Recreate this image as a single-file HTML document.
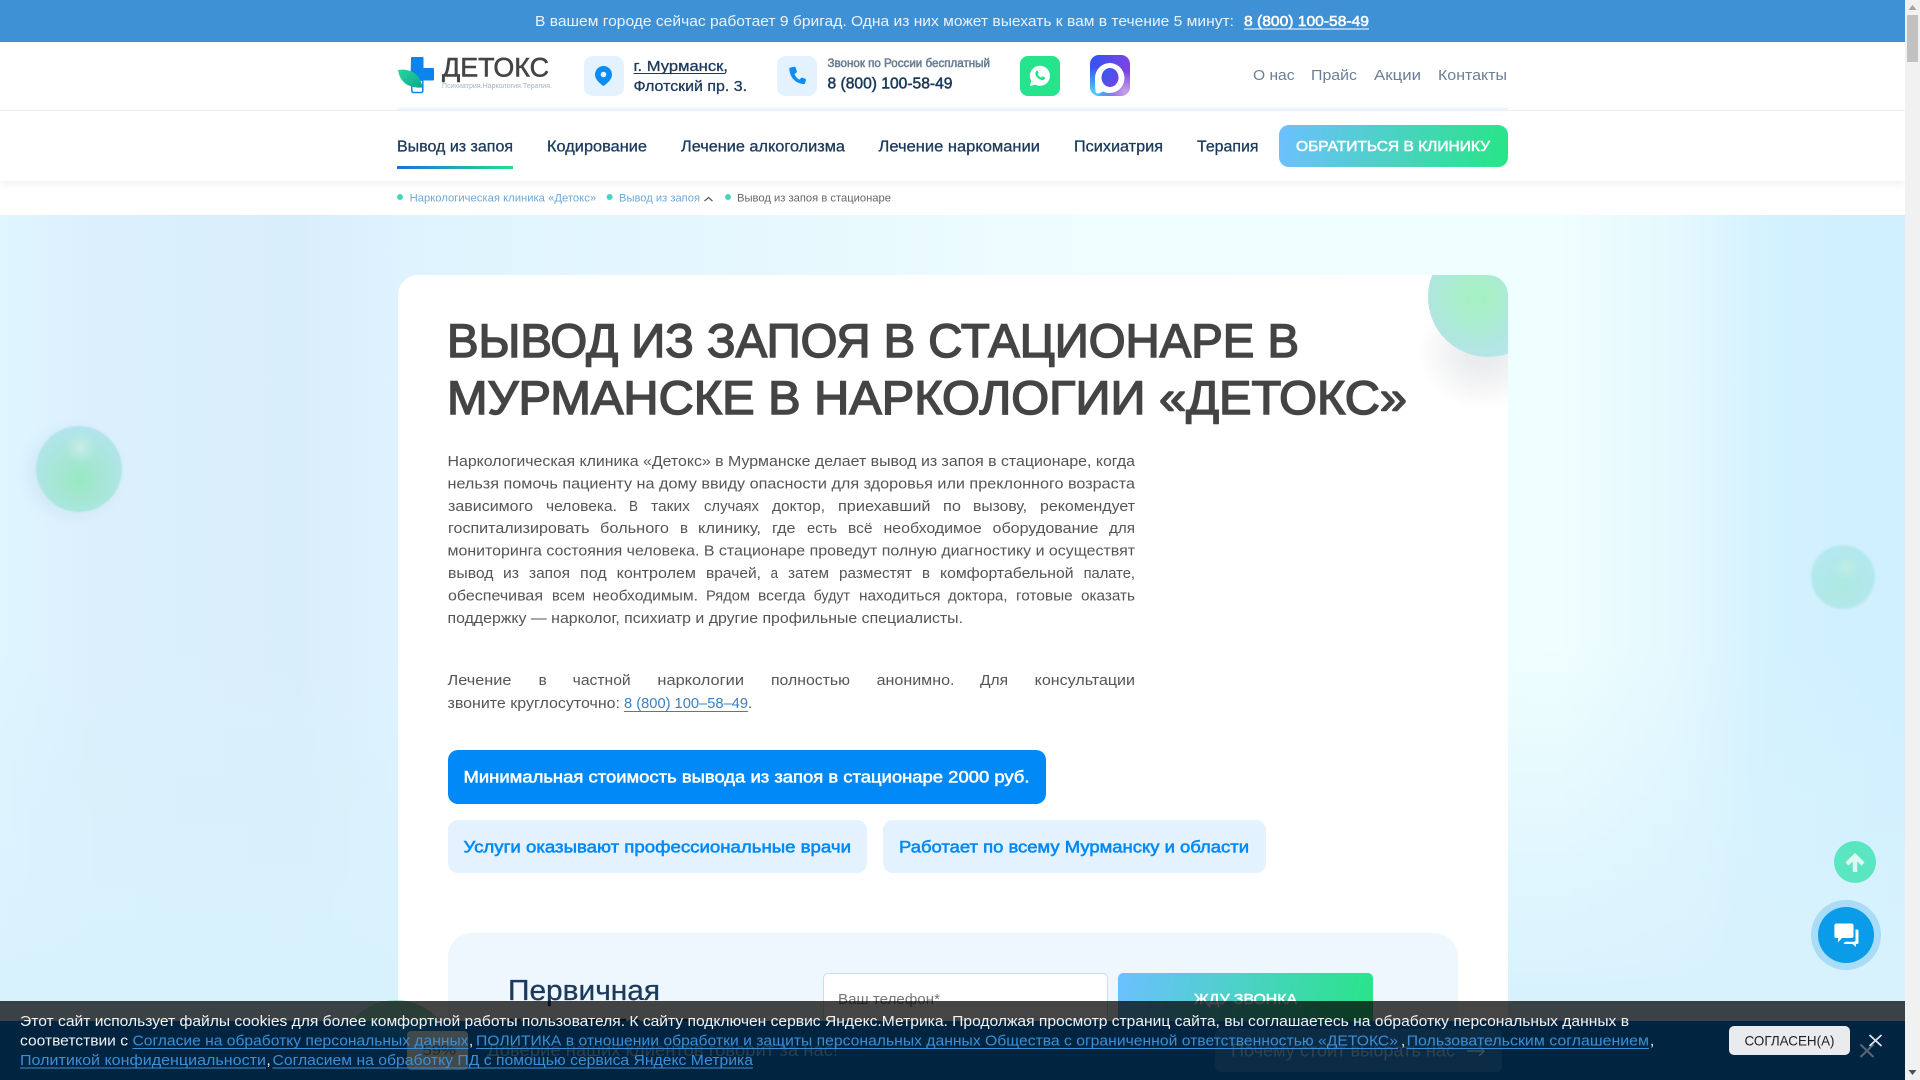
<!DOCTYPE html>
<html lang="ru"><head><meta charset="utf-8"><title>Детокс</title>
<style>
html,body{margin:0;padding:0;width:1920px;height:1080px;overflow:hidden;background:#fff}
div{position:absolute;box-sizing:border-box}
svg{position:absolute;left:0;top:0;display:block}
text{font-family:"Liberation Sans",sans-serif;white-space:pre}
.m{stroke:currentColor;stroke-width:.3px}
.s{stroke:currentColor;stroke-width:.55px}
.t{stroke:currentColor;stroke-width:1.5px}
.p text,text.p{font-size:15px;fill:#555}
.c text{font-size:15px;fill:#f2f2f2}
.c .l{fill:#3a8fd8}
</style></head><body>

<div style="left:0;top:215px;width:1905px;height:865px;background:linear-gradient(to bottom,rgba(216,242,253,0) 50%,#d8f2fd 90%),linear-gradient(to right,#dff5ff 0,#dbf0fc 100px,#d9eefb 300px,#def3fe 400px,#eefdff 1100px,#effeff 1560px,#e4f8fe 1680px,#d3f1fe 1770px,#cfeffe 1905px)"></div>
<div style="left:36px;top:426px;width:86px;height:86px;border-radius:50%;filter:blur(.7px);background:radial-gradient(circle at 52% 25%,#c8ede6 0,rgba(190,235,235,0) 20%),radial-gradient(circle at 50% 62%,#98e8c0 0,#a4e6d2 28%,#b3e4ee 78%);box-shadow:-6px 4px 14px rgba(150,190,210,.18)"></div>
<div style="left:1811px;top:545px;width:64px;height:64px;border-radius:50%;filter:blur(1px);background:radial-gradient(circle at 55% 35%,#c0eee6 0,rgba(190,235,235,0) 22%),radial-gradient(circle at 50% 65%,#aee9e0 0,#b2e8ee 60%,#b8e8f2 100%)"></div>

<div style="left:398px;top:275px;width:1110px;height:805px;background:#fff;border-radius:20px 20px 0 0;overflow:hidden">
  <div style="left:1020px;top:20px;width:130px;height:115px;background:radial-gradient(closest-side,rgba(60,70,90,.10) 25%,rgba(60,70,90,0) 100%)"></div>
  <div style="left:1030px;top:-38px;width:120px;height:120px;border-radius:50%;background:radial-gradient(circle at 90% 30%,#d8f8d4 0,rgba(216,248,212,0) 22%),radial-gradient(circle at 40% 50%,#a4f0c2 0,#a8eecb 22%,#b0e6e0 50%,#b9e6ee 78%,#cdeef0 100%)"></div>
  <div style="left:50px;top:475px;width:598px;height:54px;background:#0089f7;border-radius:10px"></div>
  <div style="left:50px;top:545px;width:419px;height:53px;background:#e3f2fe;border-radius:10px"></div>
  <div style="left:485px;top:545px;width:383px;height:53px;background:#e3f2fe;border-radius:10px"></div>
  <div style="left:50px;top:658px;width:1010px;height:147px;background:#eef7fe;border-radius:24px 24px 0 0"></div>
  <div style="left:425px;top:698px;width:285px;height:70px;background:#fff;border:1.5px solid #a8f0e4;border-radius:5px"></div>
  <div style="left:720px;top:698px;width:255px;height:70px;border-radius:5px;background:linear-gradient(100deg,#6cc0ff,#27e585)"></div>
</div>

<div style="left:0;top:0;width:1905px;height:42px;background:#3f91d6"></div>
<div style="left:0;top:42px;width:1905px;height:173px;background:#fff"></div>
<div style="left:0;top:110px;width:1905px;height:1px;background:#edf4fa"></div>
<div style="left:397px;top:108px;width:1111px;height:2px;background:#eef6fd"></div>
<div style="left:0;top:111px;width:1905px;height:70px;background:#fff;box-shadow:0 3px 8px rgba(40,60,90,.07)"></div>
<div style="left:584px;top:56px;width:40px;height:40px;background:#e3f2fe;border-radius:9px"></div>
<div style="left:777px;top:56px;width:40px;height:40px;background:#e3f2fe;border-radius:9px"></div>
<div style="left:1020px;top:56px;width:40px;height:40px;background:#25e48b;border-radius:8px"></div>
<div style="left:1090px;top:55px;width:40px;height:41px;border-radius:9px;background:radial-gradient(circle at 88% 90%,#c9a5ea 0,rgba(160,90,230,0) 40%),radial-gradient(circle at 8% 95%,#4fd5f5 0,rgba(60,200,245,0) 50%),linear-gradient(100deg,#2f55f5,#8a3fe0)"></div>
<div style="left:1279px;top:125px;width:229px;height:42px;border-radius:10px;background:linear-gradient(100deg,#6cc0ff,#27e585)"></div>
<div style="left:397px;top:166px;width:116px;height:3px;background:linear-gradient(to right,#1a6fe0,#22e08a)"></div>

<svg width="1920" height="1080" viewBox="0 0 1920 1080" xmlns="http://www.w3.org/2000/svg">
<defs><linearGradient id="lf" x1="0" y1="0" x2="1" y2="1"><stop offset="0" stop-color="#27d8a0"/><stop offset="1" stop-color="#0ea58c"/></linearGradient>
<linearGradient id="mx" x1="0" y1="0" x2="1" y2="1"><stop offset="0" stop-color="#2a60f0"/><stop offset="1" stop-color="#7a3fe0"/></linearGradient></defs>

<text x="535" y="26" font-size="15" fill="#eaf3fb" textLength="699" lengthAdjust="spacingAndGlyphs">В вашем городе сейчас работает 9 бригад. Одна из них может выехать к вам в течение 5 минут:</text>
<text x="1244" y="26" font-size="15" fill="#fff" class="s" color="#fff" textLength="125" lengthAdjust="spacingAndGlyphs">8 (800) 100-58-49</text>
<rect x="1244" y="28.5" width="125" height="1" fill="#fff"/>

<path d="M411 58a1 1 0 0 1 1-1h10.500a1 1 0 0 1 1 1v10h9.500a1 1 0 0 1 1 1v10.500a1 1 0 0 1-1 1h-22.500z" fill="#0b84ee"/>
<rect x="411.800" y="80" width="11" height="12.500" rx="1.500" fill="#fff" stroke="#0b84ee" stroke-width="1.500"/>
<path d="M398 70C408 68.500 420 72 422.500 87.500C411 88.500 400 84 398 70z" fill="url(#lf)"/>
<text x="442" y="76.500" font-size="27" fill="#444" color="#444" class="s" textLength="107" lengthAdjust="spacingAndGlyphs">ДЕТОКС</text>
<text x="442" y="88" font-size="7" fill="#9fb3c8" textLength="110" lengthAdjust="spacingAndGlyphs">Психиатрия.Наркология.Терапия.</text>

<path d="M603.500 66c-4.700 0-8.500 3.800-8.500 8.500 0 5.500 6 9.700 8.500 11.500 2.500-1.800 8.500-6 8.500-11.500 0-4.700-3.800-8.500-8.500-8.500z" fill="#0a8cf5"/><circle cx="603.500" cy="74.500" r="2.800" fill="#e3f2fe"/>
<text x="633.500" y="71" font-size="15" fill="#1b3a5c" color="#1b3a5c" class="m" textLength="94.500" lengthAdjust="spacingAndGlyphs">г. Мурманск,</text>
<rect x="633.500" y="73" width="92" height="1" fill="#1b3a5c"/>
<text x="633.500" y="91" font-size="15" fill="#1b3a5c" color="#1b3a5c" class="m" textLength="113.500" lengthAdjust="spacingAndGlyphs">Флотский пр. 3.</text>

<g transform="translate(-1 0)"><path d="M792 67.500l3-.8c.7-.2 1.400.2 1.600.8l1.200 3.600c.2.600 0 1.200-.5 1.600l-1.800 1.300c.9 2.600 2.500 4.400 4.900 5.600l1.700-1.600c.5-.4 1.100-.5 1.700-.3l2.300 1c.7.300 1 1 .8 1.700l-.8 2.600c-.2.700-.9 1.200-1.600 1.100-8.300-.8-13.700-7-14.200-15.200 0-.7.300-1.200.7-1.400z" fill="#0a8cf5"/></g>
<text x="827.500" y="67" font-size="11.500" fill="#6b7f94" color="#6b7f94" class="s" textLength="162.500" lengthAdjust="spacingAndGlyphs">Звонок по России бесплатный</text>
<text x="827.500" y="88.500" font-size="16" fill="#1b3a5c" color="#1b3a5c" class="s" textLength="125" lengthAdjust="spacingAndGlyphs">8 (800) 100-58-49</text>

<path d="M1040 65.800a10 10 0 0 1 0 20c-1.700 0-3.300-.4-4.800-1.200l-5.400 1.500 1.500-5.200a10 10 0 0 1 8.700-15.100z" fill="#fff"/>
<path d="M1036.500 70.800c.5-.4 1.100-.3 1.300.2l.8 1.800c.1.300 0 .6-.2.800l-.7.800c.8 1.500 1.900 2.500 3.400 3.200l.9-1c.2-.2.500-.3.800-.2l1.800.9c.4.200.6.700.4 1.200-.5 1.300-1.800 1.900-3.200 1.600-3.500-.8-6-3.300-6.500-6.300-.1-1.200.4-2.300 1.200-3z" fill="#25e48b"/>

<path d="M1110 63a15 15 0 1 1-1 30c-2.500 0-4-.6-5.500-1.500l-5 2c-1.500.3-2.800-.5-3-2-.3-3.500-.5-9-.5-13.500a15 15 0 0 1 15-15z" fill="#fff"/>
<ellipse cx="1110" cy="77.500" rx="8.500" ry="9.500" fill="url(#mx)"/>

<g color="#6b7f94" fill="#6b7f94" font-size="15">
<text x="1253" y="80" textLength="41.500" lengthAdjust="spacingAndGlyphs">О нас</text>
<text x="1311" y="80" textLength="46" lengthAdjust="spacingAndGlyphs">Прайс</text>
<text x="1374" y="80" textLength="47" lengthAdjust="spacingAndGlyphs">Акции</text>
<text x="1438" y="80" textLength="69" lengthAdjust="spacingAndGlyphs">Контакты</text>
</g>

<g fill="#1b3a5c" color="#1b3a5c" font-size="15.500" class="m">
<text class="m" x="397" y="151.500" textLength="116" lengthAdjust="spacingAndGlyphs">Вывод из запоя</text>
<text class="m" x="547" y="151.500" textLength="100" lengthAdjust="spacingAndGlyphs">Кодирование</text>
<text class="m" x="681" y="151.500" textLength="164" lengthAdjust="spacingAndGlyphs">Лечение алкоголизма</text>
<text class="m" x="878.500" y="151.500" textLength="161.500" lengthAdjust="spacingAndGlyphs">Лечение наркомании</text>
<text class="m" x="1074" y="151.500" textLength="89" lengthAdjust="spacingAndGlyphs">Психиатрия</text>
<text class="m" x="1197" y="151.500" textLength="61.500" lengthAdjust="spacingAndGlyphs">Терапия</text>
</g>
<text x="1296" y="151" font-size="15" fill="#fff" color="#fff" class="s" textLength="194" lengthAdjust="spacingAndGlyphs">ОБРАТИТЬСЯ В КЛИНИКУ</text>

<circle cx="400" cy="197" r="3" fill="#3fd8c0"/><circle cx="609.600" cy="197" r="3" fill="#3fd8c0"/><circle cx="728" cy="197" r="3" fill="#3fd8c0"/>
<g font-size="11">
<text x="409.600" y="201.500" fill="#6fa8d8" textLength="186.500" lengthAdjust="spacingAndGlyphs">Наркологическая клиника «Детокс»</text>
<text x="619" y="201.500" fill="#6fa8d8" textLength="81" lengthAdjust="spacingAndGlyphs">Вывод из запоя</text>
<text x="737" y="201.500" fill="#666" textLength="154" lengthAdjust="spacingAndGlyphs">Вывод из запоя в стационаре</text>
</g>
<path d="M704.500 201l4-3.500 4 3.500" fill="none" stroke="#556" stroke-width="1.200"/>

<g font-size="47" fill="#444" color="#444">
<text class="t" x="447" y="357" textLength="852" lengthAdjust="spacingAndGlyphs">ВЫВОД ИЗ ЗАПОЯ В СТАЦИОНАРЕ В</text>
<text class="t" x="447" y="414" textLength="960" lengthAdjust="spacingAndGlyphs">МУРМАНСКЕ В НАРКОЛОГИИ «ДЕТОКС»</text>
</g>

<g class="p">
<text x="447.500" y="466" textLength="687.500" lengthAdjust="spacingAndGlyphs">Наркологическая клиника «Детокс» в Мурманске делает вывод из запоя в стационаре, когда</text>
<text x="447.500" y="488.400" textLength="687.500" lengthAdjust="spacingAndGlyphs">нельзя помочь пациенту на дому ввиду опасности для здоровья или преклонного возраста</text>

<text x="448" y="511" textLength="85" lengthAdjust="spacingAndGlyphs">зависимого</text>
<text x="546" y="511" textLength="71" lengthAdjust="spacingAndGlyphs">человека.</text>
<text x="629" y="511" textLength="9" lengthAdjust="spacingAndGlyphs">В</text>
<text x="651" y="511" textLength="39" lengthAdjust="spacingAndGlyphs">таких</text>
<text x="704" y="511" textLength="55" lengthAdjust="spacingAndGlyphs">случаях</text>
<text x="772" y="511" textLength="53" lengthAdjust="spacingAndGlyphs">доктор,</text>
<text x="838" y="511" textLength="92.500" lengthAdjust="spacingAndGlyphs">приехавший</text>
<text x="943" y="511" textLength="18" lengthAdjust="spacingAndGlyphs">по</text>
<text x="973" y="511" textLength="54" lengthAdjust="spacingAndGlyphs">вызову,</text>
<text x="1040" y="511" textLength="95" lengthAdjust="spacingAndGlyphs">рекомендует</text>

<text x="448" y="533.200" textLength="141.500" lengthAdjust="spacingAndGlyphs">госпитализировать</text>
<text x="600" y="533.200" textLength="69" lengthAdjust="spacingAndGlyphs">больного</text>
<text x="680" y="533.200" textLength="8" lengthAdjust="spacingAndGlyphs">в</text>
<text x="698" y="533.200" textLength="63" lengthAdjust="spacingAndGlyphs">клинику,</text>
<text x="772" y="533.200" textLength="23.500" lengthAdjust="spacingAndGlyphs">где</text>
<text x="807" y="533.200" textLength="30" lengthAdjust="spacingAndGlyphs">есть</text>
<text x="848" y="533.200" textLength="24.500" lengthAdjust="spacingAndGlyphs">всё</text>
<text x="883.500" y="533.200" textLength="98.200" lengthAdjust="spacingAndGlyphs">необходимое</text>
<text x="992.500" y="533.200" textLength="106" lengthAdjust="spacingAndGlyphs">оборудование</text>
<text x="1109" y="533.200" textLength="26" lengthAdjust="spacingAndGlyphs">для</text>

<text x="447.500" y="555.600" textLength="687.500" lengthAdjust="spacingAndGlyphs">мониторинга состояния человека. В стационаре проведут полную диагностику и осуществят</text>

<text x="448" y="578" textLength="45.500" lengthAdjust="spacingAndGlyphs">вывод</text>
<text x="503" y="578" textLength="16" lengthAdjust="spacingAndGlyphs">из</text>
<text x="529" y="578" textLength="41" lengthAdjust="spacingAndGlyphs">запоя</text>
<text x="580" y="578" textLength="26.700" lengthAdjust="spacingAndGlyphs">под</text>
<text x="616.600" y="578" textLength="79.400" lengthAdjust="spacingAndGlyphs">контролем</text>
<text x="706" y="578" textLength="55" lengthAdjust="spacingAndGlyphs">врачей,</text>
<text x="770.600" y="578" textLength="7.400" lengthAdjust="spacingAndGlyphs">а</text>
<text x="788" y="578" textLength="41" lengthAdjust="spacingAndGlyphs">затем</text>
<text x="839" y="578" textLength="73" lengthAdjust="spacingAndGlyphs">разместят</text>
<text x="922" y="578" textLength="8" lengthAdjust="spacingAndGlyphs">в</text>
<text x="940" y="578" textLength="133.600" lengthAdjust="spacingAndGlyphs">комфортабельной</text>
<text x="1083.600" y="578" textLength="51.400" lengthAdjust="spacingAndGlyphs">палате,</text>

<text x="448" y="600.400" textLength="95" lengthAdjust="spacingAndGlyphs">обеспечивая</text>
<text x="552" y="600.400" textLength="33" lengthAdjust="spacingAndGlyphs">всем</text>
<text x="592.600" y="600.400" textLength="105.400" lengthAdjust="spacingAndGlyphs">необходимым.</text>
<text x="706" y="600.400" textLength="44" lengthAdjust="spacingAndGlyphs">Рядом</text>
<text x="758" y="600.400" textLength="47.500" lengthAdjust="spacingAndGlyphs">всегда</text>
<text x="813.600" y="600.400" textLength="36.400" lengthAdjust="spacingAndGlyphs">будут</text>
<text x="859" y="600.400" textLength="81.500" lengthAdjust="spacingAndGlyphs">находиться</text>
<text x="948" y="600.400" textLength="59.500" lengthAdjust="spacingAndGlyphs">доктора,</text>
<text x="1016" y="600.400" textLength="56.700" lengthAdjust="spacingAndGlyphs">готовые</text>
<text x="1081" y="600.400" textLength="54" lengthAdjust="spacingAndGlyphs">оказать</text>

<text x="447.500" y="623" textLength="515.500" lengthAdjust="spacingAndGlyphs">поддержку — нарколог, психиатр и другие профильные специалисты.</text>

<text x="447.500" y="685" textLength="64" lengthAdjust="spacingAndGlyphs">Лечение</text>
<text x="538.700" y="685" textLength="8" lengthAdjust="spacingAndGlyphs">в</text>
<text x="572.700" y="685" textLength="58" lengthAdjust="spacingAndGlyphs">частной</text>
<text x="657.400" y="685" textLength="86.600" lengthAdjust="spacingAndGlyphs">наркологии</text>
<text x="771" y="685" textLength="79" lengthAdjust="spacingAndGlyphs">полностью</text>
<text x="876.600" y="685" textLength="77.900" lengthAdjust="spacingAndGlyphs">анонимно.</text>
<text x="980" y="685" textLength="28" lengthAdjust="spacingAndGlyphs">Для</text>
<text x="1034.700" y="685" textLength="100.300" lengthAdjust="spacingAndGlyphs">консультации</text>

<text x="447.500" y="708" textLength="172.500" lengthAdjust="spacingAndGlyphs">звоните круглосуточно:</text>
<text x="624" y="708" style="fill:#3a80c0" textLength="124" lengthAdjust="spacingAndGlyphs">8 (800) 100–58–49</text>
<text x="748" y="708">.</text>
</g>
<rect x="624" y="711" width="124" height="1" fill="#3a80c0"/>

<text x="463.500" y="782.500" font-size="17" fill="#fff" color="#fff" class="s" textLength="566" lengthAdjust="spacingAndGlyphs">Минимальная стоимость вывода из запоя в стационаре 2000 руб.</text>
<text x="463.500" y="852.500" font-size="17" fill="#0089f7" color="#0089f7" class="s" textLength="387.500" lengthAdjust="spacingAndGlyphs">Услуги оказывают профессиональные врачи</text>
<text x="899" y="852.500" font-size="17" fill="#0089f7" color="#0089f7" class="s" textLength="350" lengthAdjust="spacingAndGlyphs">Работает по всему Мурманску и области</text>

<text x="508" y="1000" font-size="29" fill="#1b3a5c" color="#1b3a5c" class="m" textLength="152" lengthAdjust="spacingAndGlyphs">Первичная</text>
<text x="508" y="1034" font-size="29" fill="#1b3a5c" color="#1b3a5c" class="m" textLength="184" lengthAdjust="spacingAndGlyphs">консультация</text>
<text x="838" y="1004" font-size="14.500" fill="#777" textLength="102" lengthAdjust="spacingAndGlyphs">Ваш телефон*</text>
<text x="1194" y="1004" font-size="15" fill="#fff" color="#fff" class="s" textLength="103" lengthAdjust="spacingAndGlyphs">ЖДУ ЗВОНКА</text>
<circle cx="396" cy="1057" r="57" fill="#9fe0cc"/>

<circle cx="1855" cy="862" r="21" fill="#5ae6c0"/>
<path d="M1855 872v-16M1847 864l8-8 8 8" fill="none" stroke="#dff8f2" stroke-width="4.500"/>
<circle cx="1846" cy="935" r="35" fill="#a9dcf7"/>
<circle cx="1846" cy="935" r="28" fill="#0a9ce8"/>
<path d="M1836 923.500h15.500a2 2 0 0 1 2 2v10.500a2 2 0 0 1-2 2h-9.500l-4.200 4.500.4-4.500h-1.800a2 2 0 0 1-2-2v-10.500a2 2 0 0 1 2-2z" fill="#fff"/>
<path d="M1855.500 929.500h1.500a1.500 1.500 0 0 1 1.500 1.500v11.500a1.500 1.500 0 0 1-1.500 1.500h-1v3l-3.500-3h-9l1.500-2.200h8.500a2 2 0 0 0 2-2z" fill="#fff"/>
</svg>

<div style="left:0;top:1001px;width:1905px;height:79px;background:rgba(0,0,0,.73)"></div>
<div style="left:0;top:1021px;width:1905px;height:59px;background:#012541"></div>
<div style="left:341px;top:1021px;width:110px;height:40px;background:radial-gradient(ellipse at 50% 0,rgba(30,90,100,.2),rgba(30,90,100,0) 70%)"></div>
<div style="left:407px;top:1031px;width:61px;height:39px;background:#40494c;border-radius:4px"></div>
<div style="left:1215px;top:1029px;width:287px;height:43px;background:#0c2c45;border-radius:5px"></div>
<div style="left:1729px;top:1026px;width:121px;height:29px;background:#e9ebee;border-radius:5px"></div>

<svg width="1920" height="1080" viewBox="0 0 1920 1080" xmlns="http://www.w3.org/2000/svg">
<text x="422.500" y="1055" font-size="15" fill="#1d2a30" textLength="33.500" lengthAdjust="spacingAndGlyphs">59%</text>
<text x="487" y="1056" font-size="18" fill="#2a3e4e" textLength="351" lengthAdjust="spacingAndGlyphs">Доверие наших клиентов говорит за нас!</text>
<text x="1231" y="1056.500" font-size="18" fill="#2f4250" textLength="224" lengthAdjust="spacingAndGlyphs">Почему стоит выбрать нас</text>
<path d="M1467 1051h17m-5-5l5 5-5 5" fill="none" stroke="#37505f" stroke-width="1.500"/>
<g class="c">
<text x="20" y="1026" textLength="1609" lengthAdjust="spacingAndGlyphs">Этот сайт использует файлы cookies для более комфортной работы пользователя. К сайту подключен сервис Яндекс.Метрика. Продолжая просмотр страниц сайта, вы соглашаетесь на обработку персональных данных в</text>
<text x="20" y="1045.500" textLength="108" lengthAdjust="spacingAndGlyphs">соответствии с</text>
<text class="l" x="132.500" y="1045.500" textLength="336" lengthAdjust="spacingAndGlyphs">Согласие на обработку персональных данных</text>
<text x="469" y="1045.500">,</text>
<text class="l" x="476" y="1045.500" textLength="922" lengthAdjust="spacingAndGlyphs">ПОЛИТИКА в отношении обработки и защиты персональных данных Общества с ограниченной ответственностью «ДЕТОКС»</text>
<text x="1401" y="1045.500">,</text>
<text class="l" x="1406.600" y="1045.500" textLength="242.400" lengthAdjust="spacingAndGlyphs">Пользовательским соглашением</text>
<text x="1650" y="1045.500">,</text>
<text class="l" x="20" y="1065" textLength="246" lengthAdjust="spacingAndGlyphs">Политикой конфиденциальности</text>
<text x="266.500" y="1065">,</text>
<text class="l" x="272.500" y="1065" textLength="480.500" lengthAdjust="spacingAndGlyphs">Согласием на обработку ПД с помощью сервиса Яндекс Метрика</text>
</g>
<g fill="#3a8fd8">
<rect x="132.500" y="1048" width="336" height="1"/><rect x="476" y="1048" width="922" height="1"/><rect x="1406.600" y="1048" width="242.400" height="1"/>
<rect x="20" y="1067.500" width="246" height="1"/><rect x="272.500" y="1067.500" width="480.500" height="1"/>
</g>
<text x="1744.500" y="1045.500" font-size="14" fill="#222" textLength="90" lengthAdjust="spacingAndGlyphs">СОГЛАСЕН(А)</text>
<path d="M1860.500 1044.500l13 12.500m0-12.500l-13 12.500" stroke="#566573" stroke-width="2.200"/>
<path d="M1869.500 1035l12 11m0-11l-12 11" stroke="#dfe5ea" stroke-width="1.800"/>
</svg>

<div style="left:1905px;top:0;width:15px;height:1080px;background:#f1f1f1"></div>
<div style="left:1907px;top:15px;width:11px;height:47px;background:#c1c1c1"></div>
<svg width="1920" height="1080" viewBox="0 0 1920 1080" xmlns="http://www.w3.org/2000/svg"><path d="M1912.500 5l4 5h-8z" fill="#a3a3a3"/><path d="M1912.500 1075l4-5h-8z" fill="#505050"/></svg>
</body></html>
